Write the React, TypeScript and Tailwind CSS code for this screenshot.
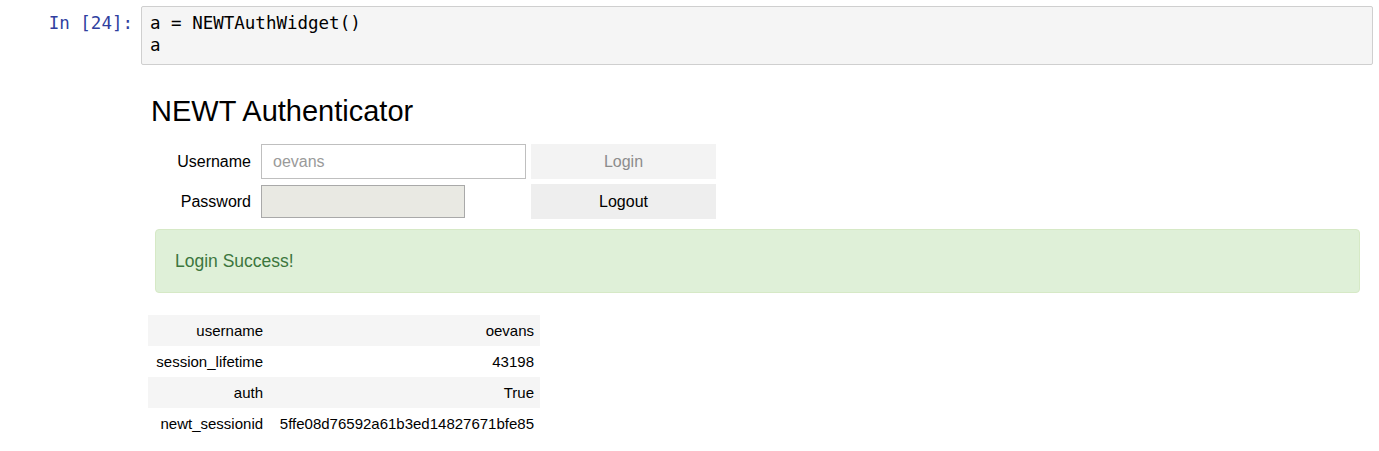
import React from "react";

const mono = { fontFamily: '"DejaVu Sans Mono", monospace' };
const sans = { fontFamily: '"Liberation Sans", Arial, sans-serif' };

const rows: [string, string][] = [
  ["username", "oevans"],
  ["session_lifetime", "43198"],
  ["auth", "True"],
  ["newt_sessionid", "5ffe08d76592a61b3ed14827671bfe85"],
];

function InputCell() {
  return (
    <div className="flex pt-[6px]">
      <div
        className="w-[141px] shrink-0 pr-[8px] pt-[6px] text-right text-[17.5px] leading-[22px] text-[#303F9F]"
        style={mono}
      >
        In&nbsp;[24]:
      </div>
      <div
        className="mr-[6px] flex-1 rounded-[2px] border border-[#cfcfcf] bg-[#f5f5f5] pb-[8px] pl-[8px] pt-[5px] text-[17.5px] leading-[22px] text-black"
        style={mono}
      >
        <div>a = NEWTAuthWidget()</div>
        <div>a</div>
      </div>
    </div>
  );
}

function AuthWidget() {
  return (
    <div className="flex flex-col" style={sans}>
      <h2 className="ml-[10px] mt-[30px] text-[29px] leading-[32px] text-black">
        NEWT Authenticator
      </h2>
      <div className="ml-[10px] mt-[17px] flex h-[35px] items-center">
        <div className="w-[100px] text-right text-[16px] text-black">Username</div>
        <div className="ml-[10px] flex h-[35px] w-[265px] items-center border border-[#bfbfbf] bg-white pl-[11px] text-[16px] text-[#9a9a9a]">
          oevans
        </div>
        <button className="ml-[5px] h-[35px] w-[185px] bg-[#f3f3f3] text-[16px] text-[#8c8c8c]">
          Login
        </button>
      </div>
      <div className="ml-[10px] mt-[5px] flex h-[35px] items-center">
        <div className="w-[100px] text-right text-[16px] text-black">Password</div>
        <div className="ml-[10px] h-[33px] w-[204px] border border-[#a9a9a9] bg-[#e9e9e3]" />
        <div className="w-[61px]" />
        <button className="ml-[5px] h-[35px] w-[185px] bg-[#eeeeee] text-[16px] text-black">
          Logout
        </button>
      </div>
      <div className="ml-[14px] mr-[19px] mt-[10px] rounded-[4px] border border-[#d6e9c6] bg-[#dff0d8] px-[19px] py-[19px] text-[17.5px] leading-[24px] text-[#3c763d]">
        Login Success!
      </div>
      <table className="ml-[7px] mt-[22px] w-[392px] border-collapse text-[15px] text-black">
        <tbody>
          {rows.map(([k, v], i) => (
            <tr key={k} className={i % 2 === 0 ? "h-[31px] bg-[#f5f5f5]" : "h-[31px]"}>
              <td className="pl-[8px] pr-[8px] pt-[2px] text-right whitespace-nowrap">{k}</td>
              <td className="pl-[8px] pr-[6px] pt-[2px] text-right whitespace-nowrap">{v}</td>
            </tr>
          ))}
        </tbody>
      </table>
    </div>
  );
}

export default function App() {
  return (
    <div className="h-[451px] w-[1379px] bg-white">
      <InputCell />
      <div className="flex">
        <div className="w-[141px] shrink-0" />
        <div className="flex-1">
          <AuthWidget />
        </div>
      </div>
    </div>
  );
}
